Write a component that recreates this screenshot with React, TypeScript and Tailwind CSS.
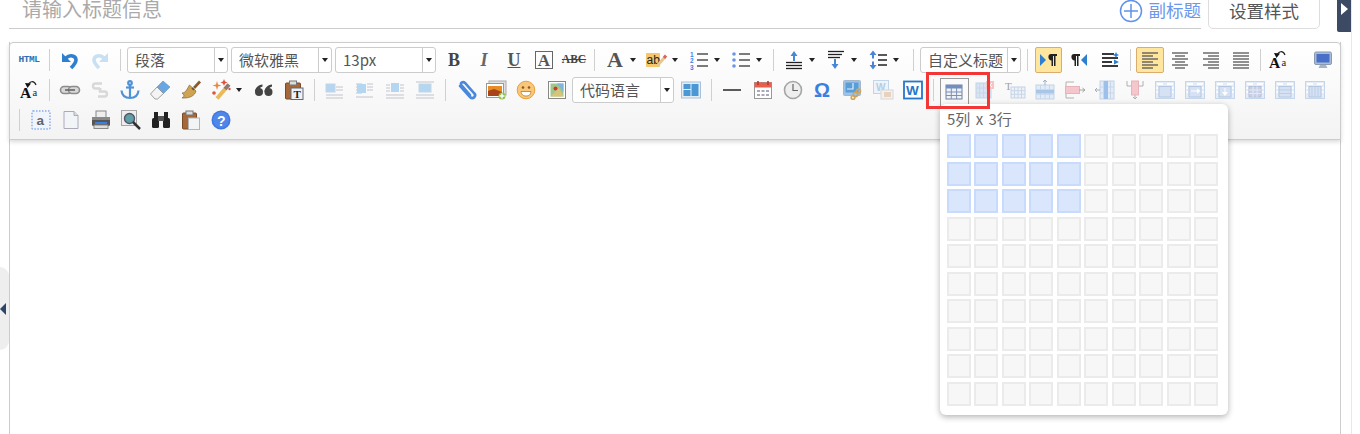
import type { ReactNode } from "react";

const serif = "font-['Liberation_Serif',serif]";

const Caret = () => <span className="block w-0 h-0 border-x-[3.5px] border-x-transparent border-t-[4px] border-t-[#222]" />;

const lines = (rows: [number, number, number][], color: string, w = 1.4) => (
  <g stroke={color} strokeWidth={w}>
    {rows.map(([a, b, y], i) => (
      <line key={i} x1={a} x2={b} y1={y} y2={y} />
    ))}
  </g>
);

// 合并、拆分单元格图标的外框
const cellFrame = (inner: ReactNode) => (
  <g>
    <rect x="0.5" y="1.5" width="19" height="17" fill="#e4ecf7" stroke="#c6d6ea" />
    <rect x="2" y="3" width="6" height="2" fill="#fff" />
    <rect x="12" y="3" width="6" height="2" fill="#fff" />
    <rect x="1.500" y="7" width="1.5" height="2" fill="#fff" />
    <rect x="1.500" y="11" width="1.5" height="2" fill="#fff" />
    <rect x="17" y="7" width="1.5" height="2" fill="#fff" />
    <rect x="17" y="11" width="1.5" height="2" fill="#fff" />
    {inner}
  </g>
);

// 浅色表格底图
const tableBase = (x: number, y: number, w: number, h: number, fill = "#e2ecf8") => (
  <g>
    <rect x={x} y={y} width={w} height={h} fill={fill} stroke="#c2d2e6" />
    {[1, 2, 3].map((i) => (
      <line key={i} x1={x + (w * i) / 4} x2={x + (w * i) / 4} y1={y} y2={y + h} stroke="#c8d6e8" />
    ))}
    {[1, 2].map((i) => (
      <line key={i} x1={x} x2={x + w} y1={y + (h * i) / 3} y2={y + (h * i) / 3} stroke="#c8d6e8" />
    ))}
  </g>
);

const caseIcon = (
  <g>
    <text x="1" y="18" fontSize="15.5" fontWeight="700" fontFamily="Liberation Serif" fill="#111">A</text>
    <text x="13.5" y="16" fontSize="10.5" fontFamily="Liberation Serif" fill="#222">a</text>
    <path d="M9 6 C10 1 15 0 17 5" fill="none" stroke="#222" strokeWidth="1.2" />
    <path d="M6 3 L12 3.500 L8.500 8 Z" fill="#111" />
  </g>
);

const icons: Record<string, ReactNode> = {
  undo: (
    <g>
      <path d="M6 8 C10 4 16 6 16 10 C16 13 14 15 11 18" fill="none" stroke="#2f7fd0" strokeWidth="3.6" />
      <path d="M2 3 V12 H11 Z" fill="#2f7fd0" />
    </g>
  ),
  redo: (
    <g>
      <path d="M14 8 C10 4 4 6 4 10 C4 13 6 15 9 18" fill="none" stroke="#c7e0f3" strokeWidth="3.6" />
      <path d="M18 3 V12 H9 Z" fill="#c7e0f3" />
    </g>
  ),
  ab: (
    <g>
      <rect x="-1" y="3" width="14" height="14" rx="1" fill="#f7c66b" />
      <text x="-0.500" y="14" fontSize="12" fontFamily="Liberation Sans" fill="#222">ab</text>
      <line x1="10" x2="18" y1="16" y2="7" stroke="#e3c98f" strokeWidth="3" />
      <line x1="17" x2="19" y1="8" y2="5.500" stroke="#e0605a" strokeWidth="3" />
    </g>
  ),
  ol: (
    <g>
      {lines([[8, 19, 4], [8, 19, 10], [8, 19, 16]], "#444", 1.4)}
      <text x="1" y="6.5" fontSize="6.5" fontWeight="700" fontFamily="Liberation Sans" fill="#3b82e6">1</text>
      <text x="1" y="13" fontSize="6.5" fontWeight="700" fontFamily="Liberation Sans" fill="#3b82e6">2</text>
      <text x="1" y="19.5" fontSize="6.5" fontWeight="700" fontFamily="Liberation Sans" fill="#3b82e6">3</text>
    </g>
  ),
  ul: (
    <g>
      {lines([[8, 19, 4], [8, 19, 10], [8, 19, 16]], "#444", 1.4)}
      <circle cx="3" cy="4" r="1.8" fill="#6b96e6" />
      <circle cx="3" cy="10" r="1.8" fill="#6b96e6" />
      <circle cx="3" cy="16" r="1.8" fill="#6b96e6" />
    </g>
  ),
  rowBefore: (
    <g>
      {lines([[2, 18, 12.5], [2, 18, 15.5], [2, 18, 18.5]], "#222", 1.3)}
      <path d="M10 1 L13.500 6 L11 6 L11 11 L9 11 L9 6 L6.500 6 Z" fill="#4a86d8" />
    </g>
  ),
  rowAfter: (
    <g>
      {lines([[2, 18, 1.5], [2, 16, 4.5], [2, 14, 7.5]], "#222", 1.3)}
      <path d="M9 19 L12.500 14 L10 14 L10 9 L8 9 L8 14 L5.500 14 Z" fill="#4a86d8" />
    </g>
  ),
  lineHeight: (
    <g>
      {lines([[10, 19, 5], [10, 19, 10], [10, 19, 15]], "#222", 1.5)}
      <path d="M5 0.5 L8.500 5 L6 5 L6 8.500 L4 8.500 L4 5 L1.500 5 Z M5 19.500 L8.500 15 L6 15 L6 11.500 L4 11.500 L4 15 L1.500 15 Z" fill="#4a86d8" />
    </g>
  ),
  ltr: (
    <g>
      <path d="M2 4 L8 10 L2 16 Z" fill="#2f7fd0" />
      <path d="M13 4 H19 V6 H17.500 V16 H16 V6 H15 V16 H13.500 V10.500 C10 10.500 9 4 13 4 Z" fill="#222" />
    </g>
  ),
  rtl: (
    <g>
      <path d="M18 4 L12 10 L18 16 Z" fill="#2f7fd0" />
      <path d="M5 4 H11 V6 H9.500 V16 H8 V6 H7 V16 H5.500 V10.500 C2 10.500 1 4 5 4 Z" fill="#222" />
    </g>
  ),
  indent: (
    <g>
      {lines([[2, 14, 4], [2, 18, 8], [2, 12, 12], [2, 18, 16]], "#222", 1.8)}
      <path d="M14 9.500 L19 12 L14 14.500 Z M16 2 L17 4 L19 5 L17 6 L16 8 L15 6 L13 5 L15 4 Z" fill="#2f7fd0" />
    </g>
  ),
  left: lines([[2, 18, 3], [2, 13, 6], [2, 18, 9], [2, 13, 12], [2, 18, 15], [2, 13, 18]], "#555", 1.3),
  center: lines([[2, 18, 3], [5, 15, 6], [2, 18, 9], [5, 15, 12], [2, 18, 15], [5, 15, 18]], "#555", 1.3),
  right: lines([[2, 18, 3], [7, 18, 6], [2, 18, 9], [7, 18, 12], [2, 18, 15], [7, 18, 18]], "#555", 1.3),
  justify: lines([[2, 18, 3], [2, 18, 6], [2, 18, 9], [2, 18, 12], [2, 18, 15], [2, 18, 18]], "#555", 1.3),
  caseA: caseIcon,
  monitor: (
    <g>
      <rect x="1.5" y="2" width="17" height="12.5" rx="1.5" fill="#a9bcd6" stroke="#8a9ab0" />
      <rect x="3.5" y="4" width="13" height="8.5" fill="#4a6fc8" />
      <path d="M7 15 H13 L14.500 18 H5.500 Z" fill="#a8b4c4" />
    </g>
  ),
  link: (
    <g fill="#d8d8d8" stroke="#8c8c8c" strokeWidth="1.6">
      <rect x="0.5" y="6.5" width="11" height="7" rx="3.5" />
      <rect x="8.5" y="6.5" width="11" height="7" rx="3.5" />
      <line x1="5" x2="15" y1="10" y2="10" stroke="#666" />
    </g>
  ),
  unlink: (
    <g fill="none" stroke="#d8d8d8" strokeWidth="2.4">
      <path d="M12 3.500 H5.500 A2.500 2.500 0 0 0 5.500 8.500 H10" />
      <path d="M9 11.500 H14.500 A2.500 2.500 0 0 1 14.500 16.500 H8" />
      <line x1="10.500" x2="9.500" y1="8" y2="12" />
    </g>
  ),
  anchor: (
    <g fill="none" stroke="#4f93d6" strokeWidth="2.2">
      <circle cx="10" cy="3" r="1.800" />
      <line x1="10" x2="10" y1="5" y2="18" />
      <line x1="6" x2="14" y1="7.500" y2="7.500" />
      <path d="M1.500 10.500 C2 16 6 18 10 18 C14 18 18 16 18.500 10.500" />
    </g>
  ),
  eraser: (
    <g>
      <path d="M13 1 L20 7 L13.500 13.500 L7 7 Z" fill="#6aa6e2" stroke="#5b8fc6" strokeWidth="0.6" />
      <path d="M7 7 L13.500 13.500 L7.500 19 L5 19 L0.500 14 Z" fill="#f4f4f4" stroke="#8a8a8a" strokeWidth="0.8" />
    </g>
  ),
  brush: (
    <g>
      <path d="M12 7 L18 0.500 L20 2.500 L14 9 Z" fill="#8a5a2b" />
      <path d="M8.500 5 L15 11 C14 15.500 9 18.500 1 18 C4 16 3 15 1 13 C5 13 6.500 8 8.500 5 Z" fill="#cfa354" stroke="#7a5520" strokeWidth="0.6" />
      <path d="M11 8 L13 10" stroke="#6a4a20" strokeWidth="1.6" />
    </g>
  ),
  wand: (
    <g>
      <line x1="6" x2="15" y1="18.5" y2="8" stroke="#eab95a" strokeWidth="4" />
      <line x1="14" x2="18" y1="9" y2="4.500" stroke="#8a7a70" strokeWidth="4" />
      <path d="M6 1 L7 4.500 L10.500 5.500 L7 6.500 L6 10 L5 6.500 L1.500 5.500 L5 4.500 Z" fill="#e8893a" />
      <path d="M13 -1 L14 1.500 L16.500 2.500 L14 3.500 L13 6 L12 3.500 L9.500 2.500 L12 1.500 Z" fill="#e0503a" />
      <circle cx="3" cy="13" r="1.800" fill="#e0503a" />
      <circle cx="18.500" cy="9" r="1.200" fill="#e0503a" />
    </g>
  ),
  quote: (
    <g fill="#444">
      <circle cx="5" cy="12" r="4" />
      <path d="M1 12 C1 8 4 5 8.500 4.500 L8.500 6.500 C6 7 5 9 5 11 Z" />
      <circle cx="14.500" cy="12" r="4" />
      <path d="M10.500 12 C10.500 8 13.500 5 18 4.500 L18 6.500 C15.500 7 14.500 9 14.500 11 Z" />
    </g>
  ),
  pasteT: (
    <g>
      <rect x="1.5" y="3" width="15" height="16" rx="1" fill="#a5683a" stroke="#7a4a25" />
      <rect x="5.5" y="1" width="7" height="4" fill="#ddd" stroke="#777" />
      <rect x="7" y="8" width="12" height="11.5" fill="#eef2f6" stroke="#667" />
      <text x="9.5" y="18" fontSize="11" fontWeight="700" fontFamily="Liberation Serif" fill="#222">T</text>
    </g>
  ),
  imgLeft: (
    <g>
      {lines([[11, 18, 7], [11, 18, 10], [1, 18, 15], [1, 18, 18]], "#c9cdd2", 1.2)}
      <rect x="1" y="4" width="9" height="8" fill="#b5d6f0" stroke="#c2d6e6" />
    </g>
  ),
  imgRight: (
    <g>
      {lines([[1, 7, 4], [1, 7, 7], [1, 7, 10], [1, 7, 13], [12, 18, 4], [12, 18, 7], [12, 18, 10], [1, 18, 17]], "#c9cdd2", 1.2)}
      <rect x="2" y="4" width="9" height="9" fill="#b5d6f0" />
    </g>
  ),
  imgMiddle: (
    <g>
      {lines([[1, 5, 5], [1, 5, 8], [1, 5, 11], [15, 19, 5], [15, 19, 8], [15, 19, 11], [1, 19, 15], [1, 19, 18]], "#c9cdd2", 1.2)}
      <rect x="6" y="3" width="8" height="9" fill="#b5d6f0" />
    </g>
  ),
  imgTop: (
    <g>
      {lines([[1, 19, 2], [1, 19, 15], [1, 19, 18]], "#c9cdd2", 1.2)}
      <rect x="4" y="4" width="12" height="8" fill="#b5d6f0" stroke="#c2d6e6" />
    </g>
  ),
  clip: (
    <path d="M3 6 L13 17 C16 20 20 16 17 13 L8 3 C6 1 2 3 5 6 L13 15" fill="none" stroke="#4a88dc" strokeWidth="2.6" strokeLinecap="round" />
  ),
  image: (
    <g>
      <rect x="3" y="1" width="17" height="14" fill="#e0e0e0" stroke="#aaa" />
      <rect x="0.5" y="3.5" width="17" height="14" fill="#fff" stroke="#999" />
      <rect x="2" y="6" width="14" height="10" fill="#a8431a" />
      <path d="M2 11 L8 9 L16 12 V6 H2 Z" fill="#e88d25" />
      <circle cx="16" cy="16" r="3.5" fill="#8cc24a" />
      <path d="M16 13.500 V18.500 M13.500 16 H18.500" stroke="#fff" strokeWidth="1.4" />
    </g>
  ),
  smile: (
    <g>
      <circle cx="10" cy="10" r="8.800" fill="#f9c77a" stroke="#e8a040" />
      <circle cx="7" cy="7.500" r="1.300" fill="#8a5a20" />
      <circle cx="13" cy="7.500" r="1.300" fill="#8a5a20" />
      <path d="M5 11.500 H15 C14.500 15 12.500 16 10 16 C7.500 16 5.500 15 5 11.500 Z" fill="#fff" stroke="#b87828" strokeWidth="0.8" />
    </g>
  ),
  map: (
    <g>
      <rect x="1.5" y="1.5" width="17" height="17" fill="#fff" stroke="#888" />
      <rect x="3.5" y="3.5" width="13" height="13" fill="#9ec98a" />
      <path d="M10 3.500 H16.500 V12 Z" fill="#7fb5e0" />
      <circle cx="8.500" cy="8.500" r="2" fill="#d9342b" />
      <path d="M3.500 16.500 L12 8 L16.500 16.500 Z" fill="#d9c27a" />
    </g>
  ),
  layout: (
    <g>
      <rect x="0.5" y="2" width="19" height="16" fill="#e2edf7" stroke="#a8c0d8" />
      <rect x="2.5" y="4" width="7" height="5" fill="#4a97d4" />
      <rect x="2.5" y="10" width="7" height="6" fill="#4a97d4" />
      <rect x="10.5" y="4" width="7" height="12" fill="#4a97d4" />
    </g>
  ),
  hr: <line x1="1" x2="19" y1="10" y2="10" stroke="#333" strokeWidth="1.6" />,
  date: (
    <g>
      <rect x="1.5" y="2.5" width="17" height="16" fill="#fff" stroke="#999" />
      <rect x="1.5" y="2.5" width="17" height="5" fill="#e8604c" />
      <path d="M5 1 V5 M15 1 V5" stroke="#b33" strokeWidth="1.6" />
      <g fill="#aab">
        <rect x="4" y="10" width="3" height="2" />
        <rect x="8.5" y="10" width="3" height="2" />
        <rect x="13" y="10" width="3" height="2" />
        <rect x="4" y="14" width="3" height="2" />
        <rect x="8.5" y="14" width="3" height="2" />
        <rect x="13" y="14" width="3" height="2" />
      </g>
    </g>
  ),
  clock: (
    <g>
      <circle cx="10" cy="10" r="8.500" fill="#eee" stroke="#a5a5a5" strokeWidth="1.6" />
      <path d="M10 4 V10.500 H15" fill="none" stroke="#666" strokeWidth="1.2" />
    </g>
  ),
  omega: <text x="1" y="17" fontSize="20" fontWeight="700" fontFamily="Liberation Sans" fill="#3b7fe0">Ω</text>,
  pdf: (
    <g>
      <rect x="0.5" y="0.5" width="17" height="15" rx="1" fill="#9dc3e8" stroke="#a4b6ca" />
      <rect x="2.5" y="2.5" width="13" height="10" fill="#5a9ed8" />
      <path d="M10 3 V9 H4" fill="none" stroke="#e4eef8" strokeWidth="1.2" />
      <circle cx="15.5" cy="11" r="2" fill="none" stroke="#cfa55a" strokeWidth="1.6" />
      <circle cx="12.5" cy="14.5" r="2.200" fill="none" stroke="#cfa55a" strokeWidth="1.6" />
      <circle cx="10" cy="17.500" r="1.800" fill="none" stroke="#cfa55a" strokeWidth="1.6" />
    </g>
  ),
  wordImg: (
    <g opacity="0.6">
      <rect x="0.5" y="0.5" width="15" height="13" fill="#e8f0fa" stroke="#9fbde0" />
      <text x="3" y="10.5" fontSize="10" fontWeight="700" fontFamily="Liberation Sans" fill="#85aee0">W</text>
      <rect x="8" y="10" width="12" height="9" fill="#eee" stroke="#c0c0c0" />
      <rect x="11" y="12" width="7" height="5" fill="#e0b898" />
    </g>
  ),
  word: (
    <g>
      <rect x="1" y="1.500" width="18" height="17" fill="#fff" stroke="#2477c9" strokeWidth="1.8" />
      <text x="3" y="15" fontSize="13.5" fontWeight="700" fontFamily="Liberation Sans" fill="#2477c9">W</text>
    </g>
  ),
  table: (
    <g>
      <rect x="2" y="3" width="16" height="14" fill="#eef2f8" stroke="#6f7fa8" />
      <rect x="2" y="3" width="16" height="3.5" fill="#6f8fc4" />
      <path d="M7.300 6 V17 M12.600 6 V17 M2 10 H18 M2 13.500 H18" stroke="#7f8fb0" />
    </g>
  ),
  delTable: (
    <g>
      {tableBase(1, 3, 15, 15, "#d8e4f4")}
      <rect x="11" y="1" width="8" height="8" fill="#f5c4c4" />
      <path d="M13 3 L17 7 M17 3 L13 7" stroke="#fff" />
    </g>
  ),
  caption: (
    <g>
      {tableBase(6, 7, 14, 11, "#eef1f5")}
      <text x="0" y="10" fontSize="11" fontFamily="Liberation Serif" fill="#a0a0a0">T</text>
    </g>
  ),
  insRow: (
    <g>
      {tableBase(1, 5, 18, 14)}
      <path d="M10 0 V5 M8 2 L10 0 L12 2" stroke="#a4afbe" fill="none" />
      <rect x="1" y="10" width="18" height="3.5" fill="#a8c6e8" />
    </g>
  ),
  delRow: (
    <g>
      <path d="M9 2 H1 V6 M9 18 H1 V14" stroke="#b0b0b0" fill="none" />
      <rect x="0.5" y="6.5" width="14" height="7" fill="#f5c6cb" stroke="#e3b4ba" />
      <path d="M14 10 H20 M17.500 8 L20 10 L17.500 12" stroke="#a4a4a4" fill="none" />
    </g>
  ),
  insCol: (
    <g>
      {tableBase(5, 1, 14, 18)}
      <path d="M0 10 H5 M2 8 L0 10 L2 12" stroke="#a4afbe" fill="none" />
      <rect x="9" y="1" width="4" height="18" fill="#9cc0ea" />
    </g>
  ),
  delCol: (
    <g>
      <path d="M2 1 V6 H6 M18 1 V6 H14 M10 15 V19 M8 17 L10 19 L12 17" stroke="#b0b0b0" fill="none" />
      <rect x="6.5" y="1" width="7" height="14" fill="#f5c6cb" stroke="#e3b4ba" />
    </g>
  ),
  merge: cellFrame(<rect x="4" y="6.500" width="12" height="10.500" fill="#d6e2f4" stroke="#b4c6e0" />),
  mergeRight: cellFrame(
    <g>
      <rect x="4" y="6.500" width="12" height="10.500" fill="#d6e2f4" stroke="#b4c6e0" />
      <path d="M6 10.500 H12 V8.500 L15.500 11 L12 13.500 V11.500 H6 Z" fill="#fff" />
    </g>
  ),
  mergeDown: cellFrame(
    <g>
      <rect x="4" y="6.500" width="12" height="10.500" fill="#d6e2f4" stroke="#b4c6e0" />
      <path d="M9.500 8 H10.500 V12 H13 L10 16 L7 12 H9.500 Z" fill="#fff" />
    </g>
  ),
  split: cellFrame(
    <g>
      <rect x="4" y="6.500" width="12" height="10.500" fill="#c8d0e6" stroke="#b4c0da" />
      <path d="M8 6.500 V17 M12 6.500 V17 M4 10 H16 M4 13.500 H16" stroke="#e4e9f4" />
    </g>
  ),
  splitRow: cellFrame(
    <g>
      <rect x="4" y="6.500" width="12" height="10.500" fill="#d6e2f4" stroke="#b4c6e0" />
      <path d="M4 10 H16 M4 13.500 H16" stroke="#bccde4" />
    </g>
  ),
  splitCol: cellFrame(
    <g>
      <rect x="4" y="6.500" width="12" height="10.500" fill="#d6e2f4" stroke="#b4c6e0" />
      <path d="M7 6.500 V17 M10 6.500 V17 M13 6.500 V17" stroke="#bccde4" />
    </g>
  ),
  anchorA: (
    <g>
      <rect x="1" y="1" width="18" height="18" rx="1" fill="#f0f4fc" stroke="#85aaec" strokeWidth="1.4" strokeDasharray="1.5 1.5" />
      <text x="5.500" y="14.500" fontSize="13.5" fontWeight="700" fontFamily="Liberation Sans" fill="#666">a</text>
    </g>
  ),
  page: (
    <g>
      <path d="M3 1.500 H13 L17 5.500 V18.500 H3 Z" fill="#f2f5f8" stroke="#aab" />
      <path d="M13 1.500 V5.500 H17" fill="#ddd" stroke="#aab" />
    </g>
  ),
  print: (
    <g>
      <rect x="5" y="1" width="10" height="7" fill="#eee" stroke="#888" />
      <rect x="1" y="7" width="18" height="9" rx="1.5" fill="#555" />
      <rect x="1" y="7" width="18" height="3" fill="#888" />
      <rect x="4" y="12" width="12" height="2" fill="#3b7fe0" />
      <rect x="3" y="15" width="14" height="3.5" fill="#ddd" stroke="#888" />
    </g>
  ),
  preview: (
    <g>
      <rect x="0.5" y="0.5" width="15" height="15" fill="#eee" stroke="#a5a5a5" />
      <circle cx="8.500" cy="8.500" r="5" fill="#5fa0a8" stroke="#556" strokeWidth="1.4" />
      <path d="M12 12 L19 19" stroke="#333" strokeWidth="2.5" />
    </g>
  ),
  search: (
    <g fill="#222">
      <rect x="1" y="8" width="7" height="10" rx="1.5" />
      <rect x="12" y="8" width="7" height="10" rx="1.5" />
      <rect x="3" y="2" width="4" height="7" />
      <rect x="13" y="2" width="4" height="7" />
      <rect x="7" y="6" width="6" height="5" fill="#555" />
    </g>
  ),
  pastePlain: (
    <g>
      <rect x="1.5" y="3" width="14" height="16" rx="1" fill="#a5683a" stroke="#7a4a25" />
      <rect x="5" y="1" width="7" height="4" fill="#ddd" stroke="#777" />
      <rect x="7.5" y="8" width="11" height="11.5" fill="#f2f4f6" stroke="#b5b5b5" />
    </g>
  ),
  help: (
    <g>
      <circle cx="10" cy="10" r="9.500" fill="#3f78e0" />
      <circle cx="10" cy="10" r="8" fill="#4f86ea" />
      <text x="6" y="15.500" fontSize="14" fontWeight="700" fontFamily="Liberation Sans" fill="#fff">?</text>
    </g>
  ),
};

function Svg({ name }: { name: string }) {
  return (
    <svg viewBox="0 0 20 20" className="w-5 h-5 shrink-0 overflow-visible">
      {icons[name]}
    </svg>
  );
}

function Btn({ name, children, className = "" }: { name?: string; children?: ReactNode; className?: string }) {
  return (
    <div className={`w-[30px] h-[30px] shrink-0 flex items-center justify-center ${className}`}>
      {name ? <Svg name={name} /> : children}
    </div>
  );
}

function Drop({ name, children, className = "" }: { name?: string; children?: ReactNode; className?: string }) {
  return (
    <div className={`w-[42px] h-[30px] shrink-0 flex items-center ${className}`}>
      <div className="w-[30px] flex justify-center">{name ? <Svg name={name} /> : children}</div>
      <Caret />
    </div>
  );
}

function Sep({ className = "w-[11px]" }: { className?: string }) {
  return (
    <div className={`h-[30px] shrink-0 flex justify-center items-center ${className}`}>
      <div className="w-px h-[22px] bg-[#d0d0d0]" />
    </div>
  );
}

function Select({ text, className = "" }: { text: string; className?: string }) {
  return (
    <div className={`h-[26px] shrink-0 flex bg-white border border-[#ccc] rounded-[3px] text-[15px] text-[#555] ${className}`}>
      <div className="flex-1 pl-[7px] leading-[24px] whitespace-nowrap overflow-hidden">{text}</div>
      <div className="w-[13px] border-l border-[#ccc] flex items-center justify-center">
        <Caret />
      </div>
    </div>
  );
}

const Glyph = ({ c, cls }: { c: string; cls: string }) => <span className={`${serif} ${cls} leading-none`}>{c}</span>;

export default function App() {
  const cells = Array.from({ length: 100 }, (_, i) => i);
  return (
    <div className="relative w-[1360px] h-[434px] overflow-hidden bg-white font-['Noto_Sans_CJK_SC','Liberation_Sans',sans-serif]">
      {/* 标题 */}
      <div className="h-[42px] flex items-start pl-[9px]">
        <div className="w-[1192px] h-[29px] border-b border-[#ccc] flex justify-between">
          <span className="pl-[13px] text-[20px] leading-[18px] text-[#aaa] whitespace-nowrap">请输入标题信息</span>
          <div className="flex items-start text-[17.5px] text-[#6b98ec]">
            <svg viewBox="0 0 24 24" className="w-6 h-6 -mt-[1px] mr-[6px]" fill="none" stroke="#5f93ec" strokeWidth="1.5">
              <circle cx="12" cy="12" r="10.5" />
              <path d="M12 5 V19 M5 12 H19" />
            </svg>
            <span className="leading-[20px]">副标题</span>
          </div>
        </div>
        <div className="ml-[7px] -mt-[1px] w-[112px] h-[30px] border border-[#ddd] rounded-b-[5px] text-[17.5px] text-[#555] text-center leading-[22px]">
          设置样式
        </div>
      </div>

      {/* 编辑器 */}
      <div className="ml-[9px] w-[1332px] h-[392px] border-x border-[#ccc]">
        <div className="h-[98px] -mx-px pt-[2px] pl-[4px] border border-[#ccc] rounded-t-[4px] bg-gradient-to-b from-white to-[#f3f3f3] shadow-[0_2px_4px_rgba(0,0,0,0.15)]">
          <div className="flex items-center h-[30px]">
            <Btn>
              <span className="font-['Liberation_Mono',monospace] text-[9.5px] font-bold tracking-[-0.5px] text-[#2f6fb0]">HTML</span>
            </Btn>
            <Sep />
            <Btn name="undo" />
            <Btn name="redo" />
            <Sep />
            <Select text="段落" className="w-[101px] ml-px" />
            <Select text="微软雅黑" className="w-[101px] ml-[3px]" />
            <Select text="13px" className="w-[101px] ml-[3px]" />
            <Btn className="ml-[3px]">
              <Glyph c="B" cls="text-[18px] font-bold text-[#444]" />
            </Btn>
            <Btn>
              <Glyph c="I" cls="text-[18px] italic font-bold text-[#666]" />
            </Btn>
            <Btn>
              <span className={`${serif} text-[18px] font-bold underline text-[#555] leading-none`}>U</span>
            </Btn>
            <Btn>
              <span className={`${serif} w-[18px] h-[18px] border border-[#666] flex items-center justify-center text-[17px] font-bold text-[#555] leading-none`}>A</span>
            </Btn>
            <Btn>
              <span className={`${serif} text-[11.5px] font-bold line-through text-[#444] leading-none`}>ABC</span>
            </Btn>
            <Sep />
            <Drop>
              <Glyph c="A" cls="text-[22px] font-bold text-[#555]" />
            </Drop>
            <Drop name="ab" />
            <Drop name="ol" />
            <Drop name="ul" />
            <Sep />
            <Drop name="rowBefore" />
            <Drop name="rowAfter" />
            <Drop name="lineHeight" />
            <Sep className="w-[11px] ml-[3px]" />
            <Select text="自定义标题" className="w-[101px] ml-px" />
            <Sep className="w-[11px] ml-px" />
            <Btn>
              <div className="w-[27px] h-[26px] flex items-center justify-center bg-[#ffe69f] border border-[#dcac6c] rounded-[2px]">
                <Svg name="ltr" />
              </div>
            </Btn>
            <Btn name="rtl" className="ml-px" />
            <Btn name="indent" className="ml-px" />
            <Sep className="w-[10px]" />
            <Btn>
              <div className="w-[28px] h-[26px] flex items-center justify-center bg-[#ffe69f] border border-[#dcac6c] rounded-[2px]">
                <Svg name="left" />
              </div>
            </Btn>
            <Btn name="center" />
            <Btn name="right" className="ml-px" />
            <Btn name="justify" />
            <Sep className="w-[9px]" />
            <Btn name="caseA" className="-ml-[2px]" />
            <Btn name="monitor" className="ml-[15px]" />
          </div>

          <div className="flex items-center h-[30px]">
            <Btn name="caseA" />
            <Sep />
            <Btn name="link" />
            <Btn name="unlink" />
            <Btn name="anchor" />
            <Btn name="eraser" />
            <Btn name="brush" className="ml-px" />
            <Drop name="wand" />
            <Btn name="quote" className="ml-px" />
            <Btn name="pasteT" />
            <Sep className="w-[10px]" />
            <Btn name="imgLeft" className="ml-px" />
            <Btn name="imgRight" />
            <Btn name="imgMiddle" />
            <Btn name="imgTop" />
            <Sep className="w-[10px]" />
            <Btn name="clip" className="ml-[2px]" />
            <Btn name="image" className="-ml-px" />
            <Btn name="smile" />
            <Btn name="map" className="ml-px" />
            <Select text="代码语言" className="w-[102px]" />
            <Btn name="layout" className="ml-[2px]" />
            <Sep className="w-[10px]" />
            <Btn name="hr" className="ml-px" />
            <Btn name="date" className="ml-px" />
            <Btn name="clock" />
            <Btn name="omega" />
            <Btn name="pdf" />
            <Btn name="wordImg" />
            <Btn name="word" />
            <Sep className="w-[10px]" />
            <Btn className="ml-px">
              <div className="w-[29px] h-[28px] mt-[3px] flex items-center justify-center border border-b-0 border-[#999] bg-[#fafafa]">
                <Svg name="table" />
              </div>
            </Btn>
            <Btn name="delTable" className="ml-px" />
            <Btn name="caption" />
            <Btn name="insRow" />
            <Btn name="delRow" />
            <Btn name="insCol" />
            <Btn name="delCol" />
            <Btn name="merge" />
            <Btn name="mergeRight" />
            <Btn name="mergeDown" />
            <Btn name="split" />
            <Btn name="splitRow" />
            <Btn name="splitCol" />
          </div>

          <div className="flex items-center h-[30px]">
            <Sep className="w-[10px]" />
            <Btn name="anchorA" className="ml-[2px]" />
            <Btn name="page" />
            <Btn name="print" />
            <Btn name="preview" />
            <Btn name="search" />
            <Btn name="pastePlain" />
            <Btn name="help" />
          </div>
        </div>
      </div>

      {/* 右侧浅色分隔线 */}
      <div className="absolute left-[1351px] top-0 bottom-0 w-px bg-[#e8e8e8]" />

      {/* 右上角折叠按钮 */}
      <div className="absolute left-[1337px] top-0 w-[14px] h-[32px] bg-[#3c4a63] rounded-bl-[2px] flex items-start justify-center pt-[2px]">
        <span className="block mt-[1px] w-0 h-0 border-y-[6px] border-y-transparent border-l-[7px] border-l-white" />
      </div>

      {/* 左侧折叠按钮 */}
      <div className="absolute left-0 top-[267px] w-[9px] h-[83px] bg-[#eeeeee] rounded-r-[9px] flex items-center">
        <span className="block w-0 h-0 border-y-[6px] border-y-transparent border-r-[6px] border-r-[#2f4468]" />
      </div>

      {/* 表格选择弹层 */}
      <div className="absolute left-[940px] top-[104px] w-[288px] h-[311px] bg-white rounded-[6px] shadow-[0_2px_6px_rgba(0,0,0,0.3)] pl-[7px]">
        <div className="h-[30px] text-[15px] leading-[30px] text-[#666] [word-spacing:2px]">5列 x 3行</div>
        <div className="grid grid-cols-10 gap-[3.5px] w-[271px]">
          {cells.map((i) => {
            const on = i % 10 < 5 && i < 30;
            return (
              <div
                key={i}
                className={on ? "h-[24px] bg-[#d9e6fb] border-2 border-[#c8dbfc]" : "h-[24px] bg-[#f7f7f7] border-2 border-[#ebebeb]"}
              />
            );
          })}
        </div>
      </div>

      {/* 红色标注框 */}
      <div className="absolute left-[926px] top-[72px] w-[64px] h-[37px] border-[3px] border-[#f33636]" />
    </div>
  );
}
